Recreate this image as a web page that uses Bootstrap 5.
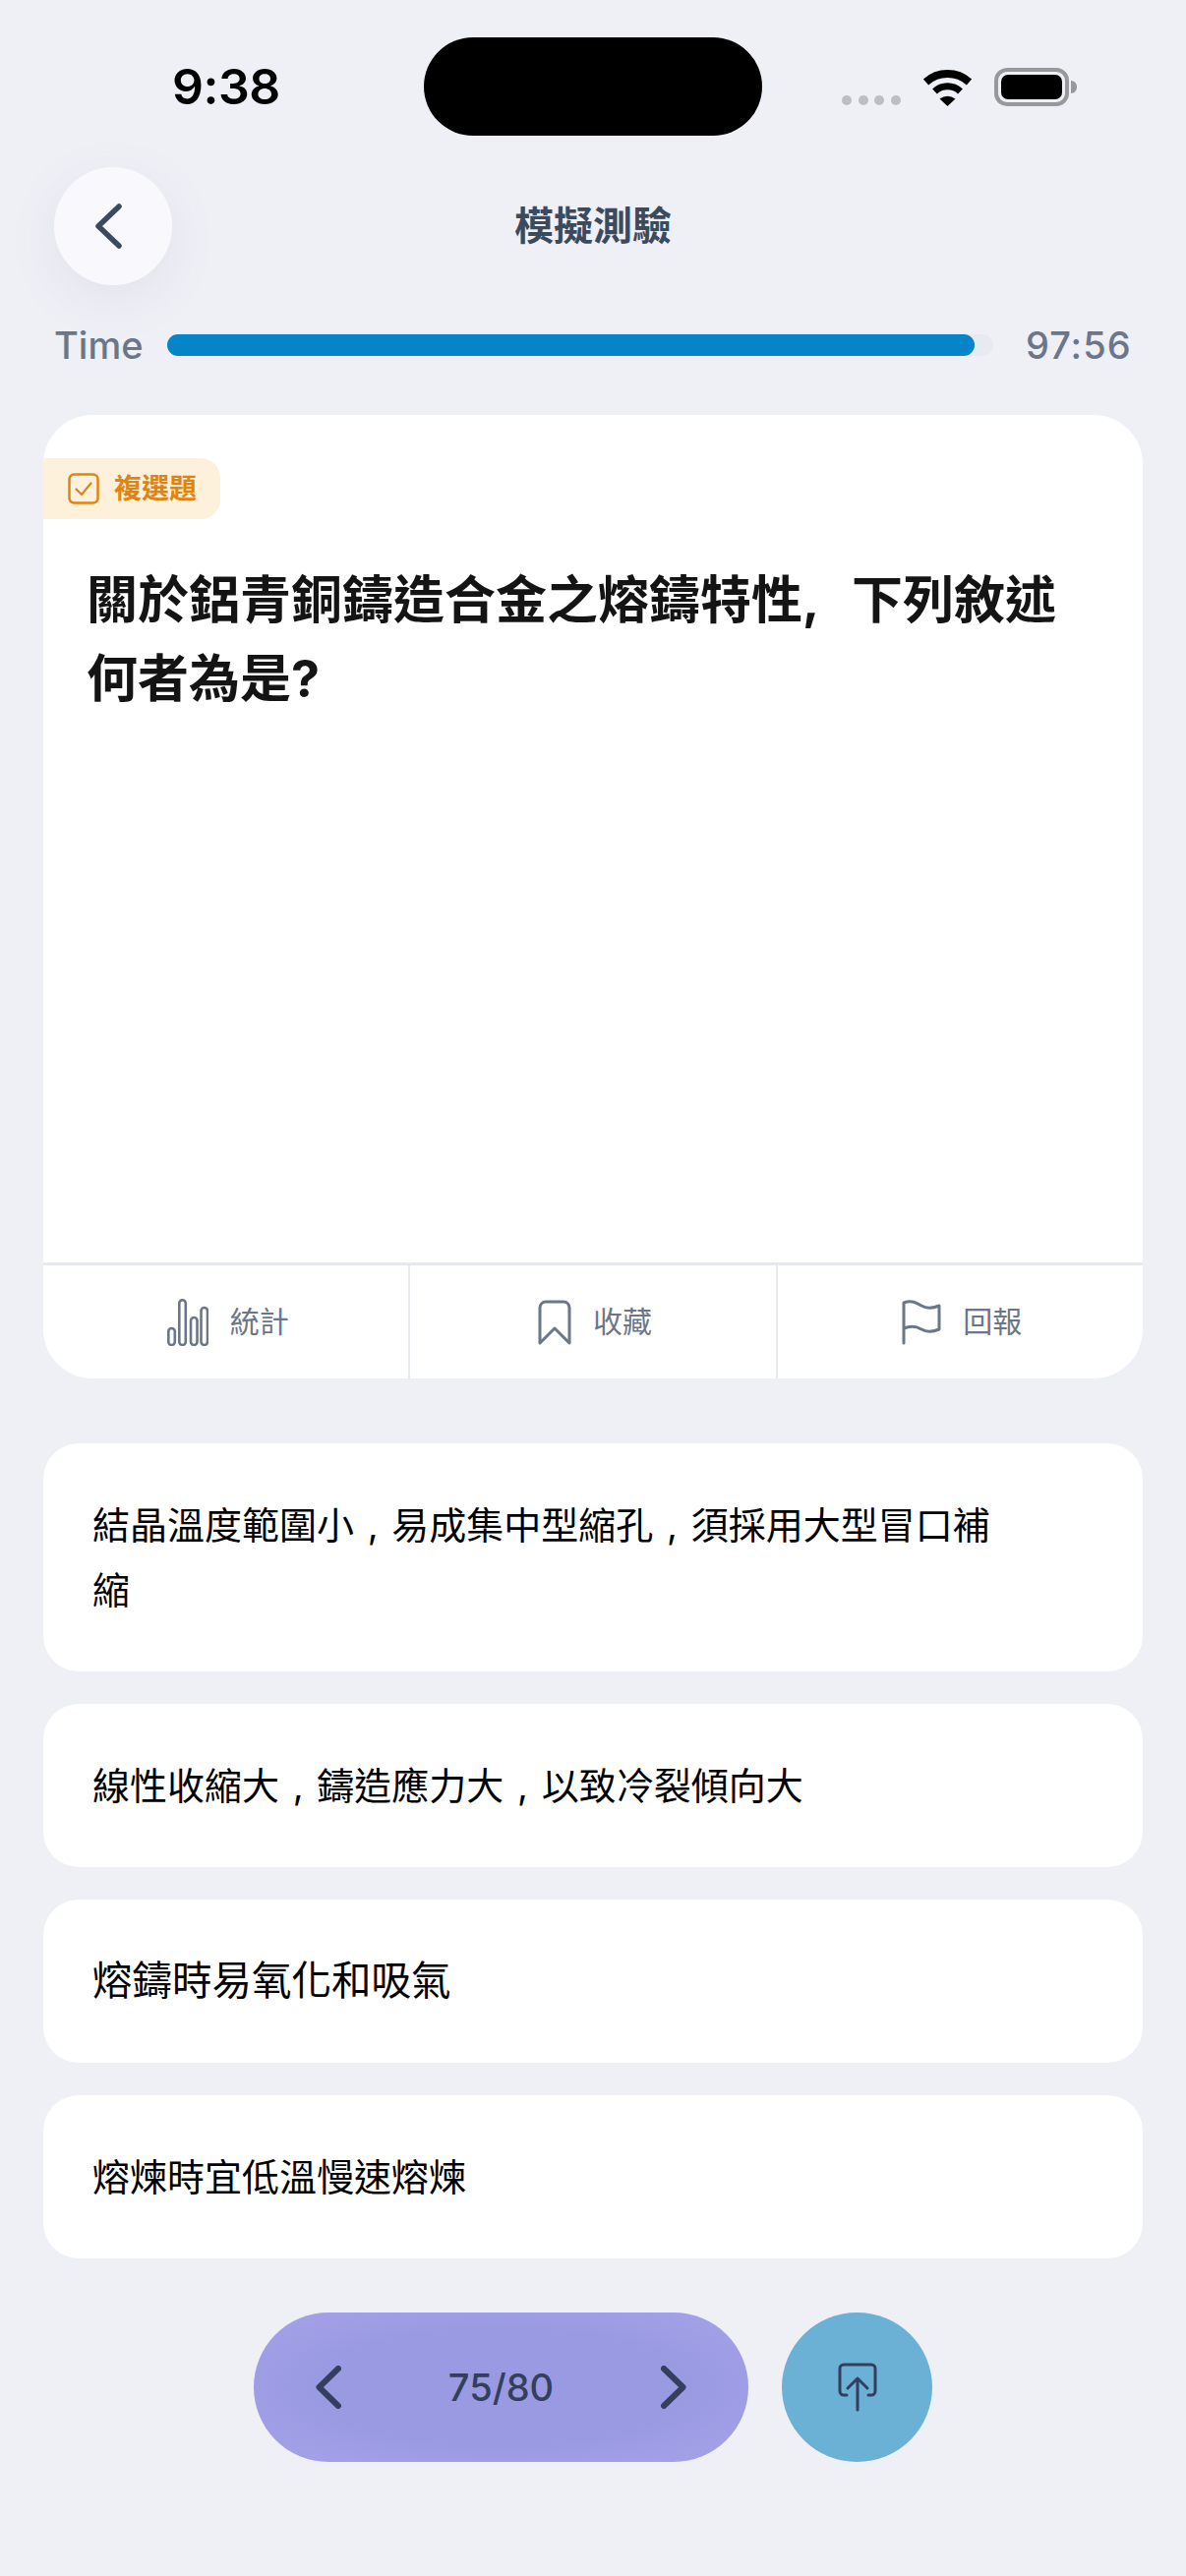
<!DOCTYPE html>
<html lang="zh-Hant">
<head>
<meta charset="utf-8">
<title>模擬測驗</title>
<link href="https://cdn.jsdelivr.net/npm/bootstrap@5.3.0/dist/css/bootstrap.min.css" rel="stylesheet">
<style>
  html, body { height: 100%; }
  body { background: #efeff6; font-family: Inter, "Noto Sans CJK TC", sans-serif; overflow: hidden; }
  .status-grid { display: grid; grid-template-columns: 431px 344px 1fr; padding-top: 38px; height: 138px; }
  .clock { padding-left: 175px; font-size: 50px; font-weight: 600; color: #000; line-height: 100px; letter-spacing: -.5px; }
  .island { background: #000; border-radius: 50px; height: 100px; }
  .status-right { padding-left: 81px; }
  .sig-dots { gap: 6.5px; margin-top: 28px; margin-right: 22px; }
  .sig-dots i { display: block; width: 10px; height: 10px; border-radius: 50%; background: #bdbdc4; }
  .batt { margin-left: 22px; width: 76px; height: 39px; border: 4px solid #97979c; border-radius: 13px; padding: 3px; }
  .batt i { display: block; height: 100%; background: #000; border-radius: 7px; }
  .batt-tip { width: 6px; height: 13px; background: #97979c; border-radius: 0 6px 6px 0; margin-left: 2px; }
  .head-grid { display: grid; grid-template-columns: 120px 1fr 120px; padding: 0 55px; margin-top: 32px; align-items: center; }
  .back-btn { width: 120px; height: 120px; border-radius: 50%; background: #f9f9fd; box-shadow: 0 14px 50px rgba(120,125,160,.1); }
  .back-btn svg { margin-right: 11px; }
  .page-title { font-size: 40px; font-weight: 600; color: #3c4a5e; text-align: center; line-height: 56px; margin: 0; }
  .timer-row { margin-top: 38px; padding: 0 50px 0 55px; height: 46px; color: #6b7688; font-size: 38px; font-weight: 500; line-height: 46px; }
  .timer-label { width: 90px; }
  .timer-value { letter-spacing: 1px; }
  .time-track { width: 840px; height: 22px; margin: 0 33px 0 25px; background: #e9e9f1; border-radius: 11px; }
  .time-fill { height: 100%; background: #0585c9; border-radius: 11px; }
  .question-card { margin: 48px 44px 0; height: 980px; border: 0; border-radius: 50px; background: #fff; overflow: hidden; }
  .question-body { height: 862px; padding-top: 44px; }
  .type-tag { width: 180px; height: 62px; background: #fdf1dc; border-radius: 0 20px 20px 0; color: #df8414; font-size: 28px; font-weight: 700; padding-left: 25px; gap: 15px; }
  .question-text { margin: 43px 40px 0 44px; font-size: 52px; line-height: 80px; font-weight: 700; color: #141414; word-spacing: 22px; }
  .action-row { height: 118px; border-top: 3px solid #e6e9ee; }
  .action-cell { flex: 1 1 0; gap: 22px; color: #6b7688; font-size: 30px; border-right: 2px solid #e8eaef; }
  .action-cell:last-child { border-right: 0; }
  .action-cell svg { margin-left: 4px; }
  .option-list { margin: 66px 44px 0; gap: 33px; }
  .option-card { border: 0; border-radius: 36px; background: #fff; padding: 50px 130px 50px 50px; font-size: 38px; font-weight: 400; line-height: 66px; color: #000; word-spacing: 3px; }
  .option-roomy { font-size: 40.5px; }
  .pager-row { margin-top: 55px; padding-left: 258px; gap: 34px; }
  .pager-pill { width: 503px; height: 152px; border-radius: 76px; background: radial-gradient(ellipse at center, #9a9ae2 55%, #a5a3ea 100%); padding: 0 63px; color: #333f5c; font-size: 38px; font-weight: 500; }
  .share-disc { width: 153px; height: 152px; border-radius: 50%; background: #6bb0d5; }
</style>
</head>
<body>
  <div class="status-grid">
    <div class="clock">9:38</div>
    <div class="island"></div>
    <div class="status-right d-flex align-items-center">
      <div class="sig-dots d-flex"><i></i><i></i><i></i><i></i></div>
      <svg width="51" height="39" viewBox="0 0 51 39" aria-hidden="true">
        <path d="M3.5 14.5A33 33 0 0 1 47.5 14.5" fill="none" stroke="#000" stroke-width="8"/>
        <path d="M12.5 24A19 19 0 0 1 38.500 24" fill="none" stroke="#000" stroke-width="7"/>
        <path d="M17.500 31.500Q25.500 26 33.500 31.500L25.500 39Z" fill="#000"/>
      </svg>
      <div class="batt"><i></i></div>
      <div class="batt-tip"></div>
    </div>
  </div>

  <div class="head-grid">
    <button type="button" class="back-btn btn p-0 border-0 d-flex align-items-center justify-content-center" aria-label="返回">
      <svg width="28" height="46" viewBox="0 0 28 46"><path d="M25 3 4 23 25 43" fill="none" stroke="#3c4a5e" stroke-width="5.500" stroke-linecap="round" stroke-linejoin="round"/></svg>
    </button>
    <h1 class="page-title">模擬測驗</h1>
    <div></div>
  </div>

  <div class="timer-row d-flex align-items-center">
    <span class="timer-label">Time</span>
    <div class="time-track"><div class="time-fill" style="width:97.700%"></div></div>
    <span class="timer-value">97:56</span>
  </div>

  <div class="card question-card">
    <div class="question-body">
      <div class="type-tag d-flex align-items-center">
        <svg width="32" height="32" viewBox="0 0 32 32"><rect x="1.500" y="1.500" width="29" height="29" rx="5" fill="none" stroke="#df8414" stroke-width="2.500"/><path d="M8.500 16.500 14 22 23.500 10.500" fill="none" stroke="#df8414" stroke-width="2.200" stroke-linecap="round" stroke-linejoin="round"/></svg>
        <span>複選題</span>
      </div>
      <p class="question-text">關於鋁青銅鑄造合金之熔鑄特性, 下列敘述何者為是?</p>
    </div>
    <div class="action-row d-flex">
      <div class="action-cell d-flex align-items-center justify-content-center">
        <svg width="42" height="48" viewBox="0 0 42 48" fill="none" stroke="#6b7688" stroke-width="2.600"><rect x="1.300" y="30" width="6.500" height="17" rx="3.200"/><rect x="12.300" y="1.300" width="6.500" height="45.700" rx="3.200"/><rect x="24" y="19" width="6.500" height="28" rx="3.200"/><rect x="34.500" y="9" width="6.500" height="38" rx="3.200"/></svg>
        <span>統計</span>
      </div>
      <div class="action-cell d-flex align-items-center justify-content-center">
        <svg width="34" height="46" viewBox="0 0 34 46" fill="none" stroke="#6b7688" stroke-width="3" stroke-linejoin="round"><path d="M2 44V8a6 6 0 0 1 6-6h18a6 6 0 0 1 6 6v36L17 29Z"/></svg>
        <span>收藏</span>
      </div>
      <div class="action-cell d-flex align-items-center justify-content-center">
        <svg width="40" height="46" viewBox="0 0 40 46" fill="none" stroke="#6b7688" stroke-width="3" stroke-linecap="round" stroke-linejoin="round"><path d="M2 44V3C10 0 15 3 20 6s11 3 18 0v24c-7 3-13 3-18 0S10 26 2 29"/></svg>
        <span>回報</span>
      </div>
    </div>
  </div>

  <div class="option-list d-flex flex-column">
    <div class="card option-card d-block">結晶溫度範圍小 , 易成集中型縮孔 , 須採用大型冒口補縮</div>
    <div class="card option-card d-block">線性收縮大 , 鑄造應力大 , 以致冷裂傾向大</div>
    <div class="card option-card option-roomy">熔鑄時易氧化和吸氣</div>
    <div class="card option-card">熔煉時宜低溫慢速熔煉</div>
  </div>

  <div class="pager-row d-flex">
    <div class="pager-pill d-flex align-items-center justify-content-between">
      <svg width="26" height="44" viewBox="0 0 26 44" fill="none" stroke="#333f5c" stroke-width="6" stroke-linecap="round" stroke-linejoin="round"><path d="M23 3 3.500 22 23 41"/></svg>
      <span>75/80</span>
      <svg width="26" height="44" viewBox="0 0 26 44" fill="none" stroke="#333f5c" stroke-width="6" stroke-linecap="round" stroke-linejoin="round"><path d="M3 3 22.500 22 3 41"/></svg>
    </div>
    <div class="share-disc d-flex align-items-center justify-content-center">
      <svg width="40" height="50" viewBox="0 0 40 50" fill="none" stroke="#333f5c" stroke-width="3" stroke-linecap="round" stroke-linejoin="round"><path d="M9 33H6a4 4 0 0 1-4-4V6a4 4 0 0 1 4-4h28a4 4 0 0 1 4 4v23a4 4 0 0 1-4 4h-3"/><path d="M20 48V16M10 26 20 16 30 26"/></svg>
    </div>
  </div>
</body>
</html>
